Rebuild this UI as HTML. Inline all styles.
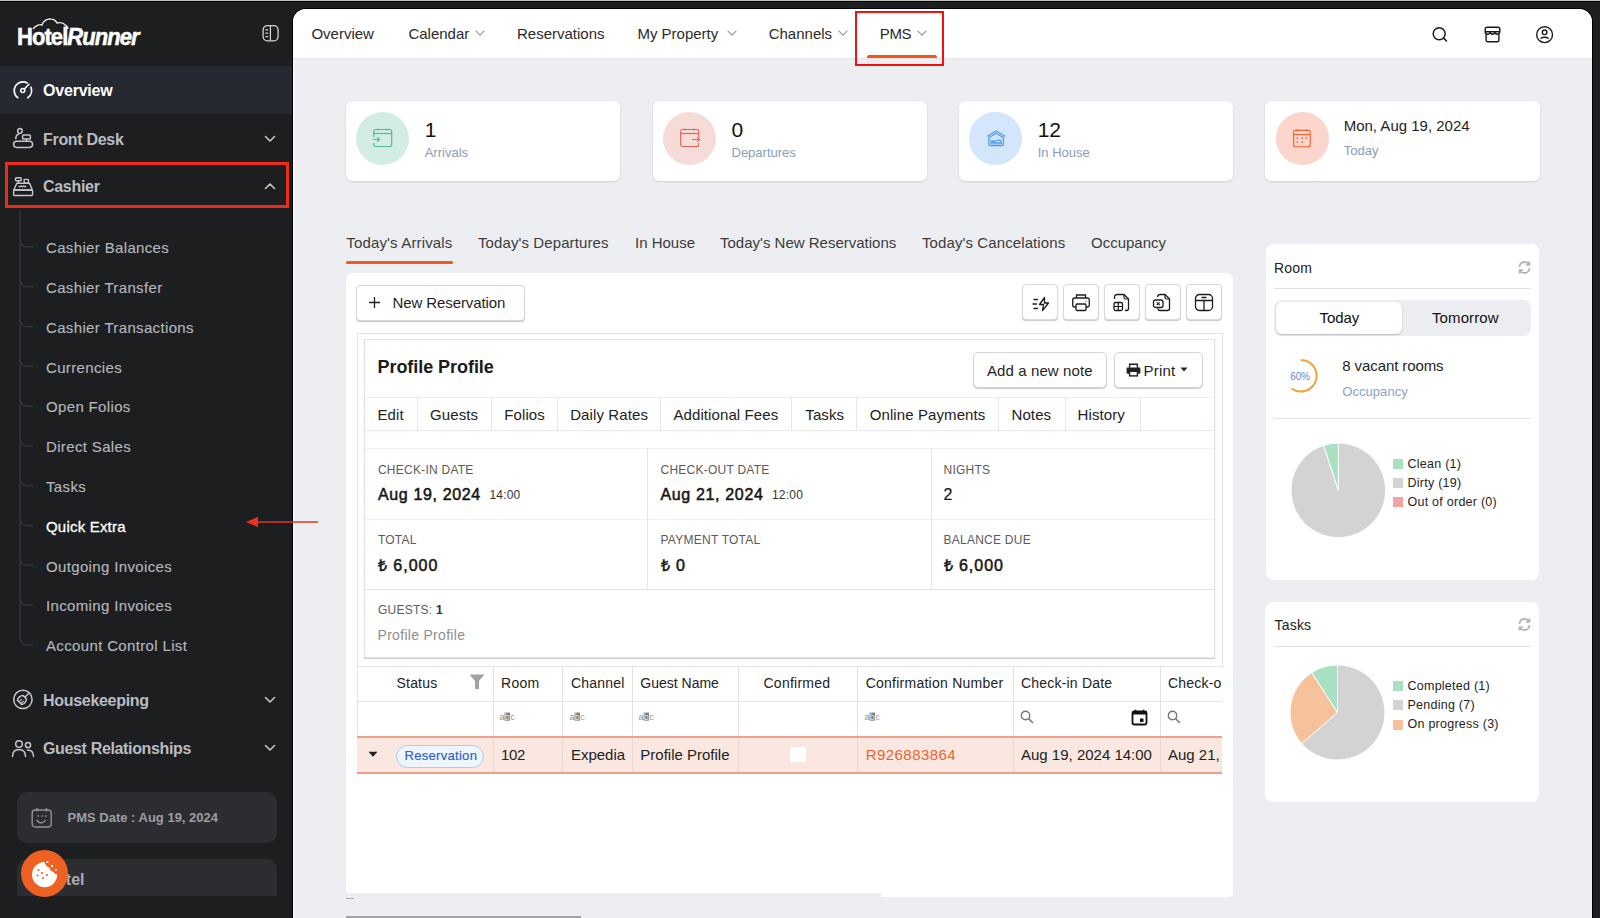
<!DOCTYPE html>
<html><head><meta charset="utf-8">
<style>
*{box-sizing:border-box;margin:0;padding:0}
html,body{width:1600px;height:918px;overflow:hidden;background:#1d1e20;font-family:"Liberation Sans",sans-serif}
body{position:relative}
.a{position:absolute}
.t{position:absolute;white-space:nowrap}
</style></head><body>
<div class="a" style="left:0px;top:0px;width:1600px;height:1px;background:#bebdc0"></div>
<div class="a" style="left:0px;top:1px;width:1600px;height:1px;background:#000"></div>
<div class="t" style="left:17px;top:24.6px;font-size:24px;line-height:24px;font-weight:700;color:#fff;letter-spacing:-1.0px;-webkit-text-stroke:0.55px #fff;transform:scaleX(0.915);transform-origin:0 0">Hotel<span style="font-style:italic">Runner</span></div>
<svg class="a" style="left:30px;top:16px;" width="42" height="15" viewBox="0 0 42 15"><path d="M3 13 C6 9 10 8 12 9 C13 5 17 2.5 21 3 C24 3.2 26 5 27 7 C30 6 34 7 35 9 C37 10 38 12 38 13" fill="none" stroke="#e6e6e6" stroke-width="1.4"/></svg>
<svg class="a" style="left:261px;top:24px;" width="19" height="19" viewBox="0 0 19 19"><rect x="2.1" y="1.6" width="15" height="15.3" rx="4.3" fill="none" stroke="#d2d3d6" stroke-width="1.3"/><line x1="9.4" y1="2" x2="9.4" y2="16.5" stroke="#d2d3d6" stroke-width="1.3"/><path d="M4.9 5.9 H6.6 M4.9 9.2 H6.6 M4.9 12.6 H6.6" stroke="#d2d3d6" stroke-width="1.3" stroke-linecap="round"/></svg>
<div class="a" style="left:0px;top:66px;width:292px;height:48px;background:#262932"></div>
<svg class="a" style="left:12px;top:80px;" width="22" height="20" viewBox="0 0 22 20"><path d="M5.75 17.7 A8.8 8.8 0 0 1 15.2 2.9" fill="none" stroke="#fff" stroke-width="1.7" stroke-linecap="round"/><path d="M18.96 7.2 A8.8 8.8 0 0 1 15.85 17.7" fill="none" stroke="#fff" stroke-width="1.7" stroke-linecap="round"/><circle cx="10.8" cy="10.5" r="2" fill="none" stroke="#fff" stroke-width="1.6"/><line x1="12.3" y1="9" x2="17" y2="4.3" stroke="#fff" stroke-width="1.6" stroke-linecap="round"/></svg>
<div class="t" style="left:43px;top:83.10px;font-size:16px;line-height:16px;color:#ffffff;font-weight:700;letter-spacing:-0.2px">Overview</div>
<svg class="a" style="left:12px;top:127px;" width="23" height="23" viewBox="0 0 23 23"><circle cx="7.9" cy="3.9" r="2.3" fill="none" stroke="#c4c6cc" stroke-width="1.5"/><path d="M6.8 7.2 Q3.8 7.6 3.8 11.8" fill="none" stroke="#c4c6cc" stroke-width="1.5" stroke-linecap="round"/><rect x="10.6" y="7.9" width="7.8" height="4.2" rx="0.8" fill="none" stroke="#c4c6cc" stroke-width="1.5"/><line x1="14.5" y1="12.1" x2="14.5" y2="14.2" stroke="#c4c6cc" stroke-width="1.5"/><rect x="1.6" y="14.2" width="19" height="6.2" rx="3.1" fill="none" stroke="#c4c6cc" stroke-width="1.5"/></svg>
<div class="t" style="left:43px;top:131.60px;font-size:16px;line-height:16px;color:#b9bcc2;font-weight:700;letter-spacing:-0.3px">Front Desk</div>
<svg class="a" style="left:264px;top:134.5px;" width="12" height="8" viewBox="0 0 12 8"><path d="M1.5 1.5 L6 6 L10.5 1.5" fill="none" stroke="#c4c6cc" stroke-width="1.6" stroke-linecap="round" stroke-linejoin="round"/></svg>
<svg class="a" style="left:12px;top:176px;" width="22" height="21" viewBox="0 0 22 21"><rect x="3.3" y="1.7" width="6.2" height="3" rx="1.5" fill="none" stroke="#c4c6cc" stroke-width="1.4"/><line x1="6.4" y1="4.7" x2="6.4" y2="7.2" stroke="#c4c6cc" stroke-width="1.4"/><rect x="12.2" y="3.4" width="4.2" height="3.8" rx="0.5" fill="none" stroke="#c4c6cc" stroke-width="1.4"/><path d="M4.8 7.2 H17.6 L20.3 14 H1.8 Z" fill="none" stroke="#c4c6cc" stroke-width="1.4" stroke-linejoin="round"/><rect x="1.6" y="14" width="19" height="5.5" rx="1.2" fill="none" stroke="#c4c6cc" stroke-width="1.4"/><path d="M6.5 9.8 L7.8 11 L9.1 9.8 L10.4 11 L11.7 9.8 L13 11 L14.3 9.8" fill="none" stroke="#c4c6cc" stroke-width="1.1"/></svg>
<div class="t" style="left:43px;top:178.90px;font-size:16px;line-height:16px;color:#b9bcc2;font-weight:700;letter-spacing:-0.3px">Cashier</div>
<svg class="a" style="left:264px;top:182px;" width="12" height="8" viewBox="0 0 12 8"><path d="M1.5 6.5 L6 2 L10.5 6.5" fill="none" stroke="#c4c6cc" stroke-width="1.6" stroke-linecap="round" stroke-linejoin="round"/></svg>
<div class="a" style="left:5px;top:162px;width:284px;height:46px;border:3px solid #ee2a1b"></div>
<div class="t" style="left:46px;top:240.25px;font-size:15px;line-height:15px;color:#b3b6bc;font-weight:400;letter-spacing:0.35px;-webkit-text-stroke:0.15px #b3b6bc">Cashier Balances</div>
<div class="t" style="left:46px;top:280.05px;font-size:15px;line-height:15px;color:#b3b6bc;font-weight:400;letter-spacing:0.35px;-webkit-text-stroke:0.15px #b3b6bc">Cashier Transfer</div>
<div class="t" style="left:46px;top:319.85px;font-size:15px;line-height:15px;color:#b3b6bc;font-weight:400;letter-spacing:0.35px;-webkit-text-stroke:0.15px #b3b6bc">Cashier Transactions</div>
<div class="t" style="left:46px;top:359.65px;font-size:15px;line-height:15px;color:#b3b6bc;font-weight:400;letter-spacing:0.35px;-webkit-text-stroke:0.15px #b3b6bc">Currencies</div>
<div class="t" style="left:46px;top:399.45px;font-size:15px;line-height:15px;color:#b3b6bc;font-weight:400;letter-spacing:0.35px;-webkit-text-stroke:0.15px #b3b6bc">Open Folios</div>
<div class="t" style="left:46px;top:439.25px;font-size:15px;line-height:15px;color:#b3b6bc;font-weight:400;letter-spacing:0.35px;-webkit-text-stroke:0.15px #b3b6bc">Direct Sales</div>
<div class="t" style="left:46px;top:479.05px;font-size:15px;line-height:15px;color:#b3b6bc;font-weight:400;letter-spacing:0.35px;-webkit-text-stroke:0.15px #b3b6bc">Tasks</div>
<div class="t" style="left:46px;top:518.85px;font-size:15px;line-height:15px;color:#ffffff;font-weight:400;letter-spacing:0.2px;-webkit-text-stroke:0.3px #fff">Quick Extra</div>
<div class="t" style="left:46px;top:558.65px;font-size:15px;line-height:15px;color:#b3b6bc;font-weight:400;letter-spacing:0.35px;-webkit-text-stroke:0.15px #b3b6bc">Outgoing Invoices</div>
<div class="t" style="left:46px;top:598.45px;font-size:15px;line-height:15px;color:#b3b6bc;font-weight:400;letter-spacing:0.35px;-webkit-text-stroke:0.15px #b3b6bc">Incoming Invoices</div>
<div class="t" style="left:46px;top:638.25px;font-size:15px;line-height:15px;color:#b3b6bc;font-weight:400;letter-spacing:0.35px;-webkit-text-stroke:0.15px #b3b6bc">Account Control List</div>
<svg class="a" style="left:19px;top:210px;" width="16" height="450" viewBox="0 0 16 450"><line x1="1" y1="0" x2="1" y2="427" stroke="#2f323a" stroke-width="1.6"/><path d="M1 29.0 Q1 37.0 9 37.0 H14" fill="none" stroke="#2f323a" stroke-width="1.6"/><path d="M1 68.80000000000001 Q1 76.80000000000001 9 76.80000000000001 H14" fill="none" stroke="#2f323a" stroke-width="1.6"/><path d="M1 108.60000000000002 Q1 116.60000000000002 9 116.60000000000002 H14" fill="none" stroke="#2f323a" stroke-width="1.6"/><path d="M1 148.39999999999998 Q1 156.39999999999998 9 156.39999999999998 H14" fill="none" stroke="#2f323a" stroke-width="1.6"/><path d="M1 188.2 Q1 196.2 9 196.2 H14" fill="none" stroke="#2f323a" stroke-width="1.6"/><path d="M1 228.0 Q1 236.0 9 236.0 H14" fill="none" stroke="#2f323a" stroke-width="1.6"/><path d="M1 267.79999999999995 Q1 275.79999999999995 9 275.79999999999995 H14" fill="none" stroke="#2f323a" stroke-width="1.6"/><path d="M1 307.5999999999999 Q1 315.5999999999999 9 315.5999999999999 H14" fill="none" stroke="#2f323a" stroke-width="1.6"/><path d="M1 347.4 Q1 355.4 9 355.4 H14" fill="none" stroke="#2f323a" stroke-width="1.6"/><path d="M1 387.20000000000005 Q1 395.20000000000005 9 395.20000000000005 H14" fill="none" stroke="#2f323a" stroke-width="1.6"/><path d="M1 427.0 Q1 435.0 9 435.0 H14" fill="none" stroke="#2f323a" stroke-width="1.6"/></svg>
<svg class="a" style="left:12px;top:689px;" width="22" height="22" viewBox="0 0 22 22"><circle cx="10.9" cy="10.4" r="9.2" fill="none" stroke="#c4c6cc" stroke-width="1.5"/><path d="M12.8 8.2 L16.3 4.7" stroke="#c4c6cc" stroke-width="1.5" stroke-linecap="round"/><path d="M11.2 6.6 L14.4 9.8 C14.2 12.8 12.6 14.8 9.8 15.6 L5.4 11.2 C6.2 8.4 8.2 6.8 11.2 6.6 Z" fill="none" stroke="#c4c6cc" stroke-width="1.5" stroke-linejoin="round"/><path d="M7.8 12.2 L9.6 10.4 M9.6 14 L11.4 12.2" stroke="#c4c6cc" stroke-width="1.2" stroke-linecap="round"/></svg>
<div class="t" style="left:43px;top:693.10px;font-size:16px;line-height:16px;color:#b9bcc2;font-weight:700;letter-spacing:-0.3px">Housekeeping</div>
<svg class="a" style="left:264px;top:696px;" width="12" height="8" viewBox="0 0 12 8"><path d="M1.5 1.5 L6 6 L10.5 1.5" fill="none" stroke="#c4c6cc" stroke-width="1.6" stroke-linecap="round" stroke-linejoin="round"/></svg>
<svg class="a" style="left:11px;top:739px;" width="24" height="19" viewBox="0 0 24 19"><circle cx="8" cy="5" r="3.3" fill="none" stroke="#c4c6cc" stroke-width="1.5"/><path d="M1.5 17.5 C1.5 13 4 10.5 8 10.5 C12 10.5 14.5 13 14.5 17.5" fill="none" stroke="#c4c6cc" stroke-width="1.5" stroke-linecap="round"/><circle cx="17" cy="6" r="2.6" fill="none" stroke="#c4c6cc" stroke-width="1.5"/><path d="M16.5 11 C20 11 22.5 13 22.5 17.5" fill="none" stroke="#c4c6cc" stroke-width="1.5" stroke-linecap="round"/></svg>
<div class="t" style="left:43px;top:740.50px;font-size:16px;line-height:16px;color:#b9bcc2;font-weight:700;letter-spacing:-0.35px">Guest Relationships</div>
<svg class="a" style="left:264px;top:744px;" width="12" height="8" viewBox="0 0 12 8"><path d="M1.5 1.5 L6 6 L10.5 1.5" fill="none" stroke="#c4c6cc" stroke-width="1.6" stroke-linecap="round" stroke-linejoin="round"/></svg>
<div class="a" style="left:17px;top:792px;width:260px;height:51px;background:#2c2d31;border-radius:10px"></div>
<svg class="a" style="left:31px;top:807px;" width="22" height="21" viewBox="0 0 22 21"><rect x="1.2" y="3" width="19" height="17" rx="3" fill="none" stroke="#909298" stroke-width="1.4"/><line x1="6" y1="1" x2="6" y2="4.5" stroke="#909298" stroke-width="1.4"/><line x1="15.5" y1="1" x2="15.5" y2="4.5" stroke="#909298" stroke-width="1.4"/><path d="M6.5 9 h1.5 M10.5 9 h1.5 M14 9 h1.5" stroke="#909298" stroke-width="1.4"/><path d="M7 14.5 C9 16.5 12.5 16.5 14.5 13" fill="none" stroke="#909298" stroke-width="1.4"/><path d="M5.5 12.8 L7.5 14.8" stroke="#909298" stroke-width="1.4"/></svg>
<div class="t" style="left:67.5px;top:811.15px;font-size:13px;line-height:13px;color:#9c9ea4;font-weight:700;">PMS Date : Aug 19, 2024</div>
<div class="a" style="left:17px;top:859px;width:260px;height:37px;background:#2c2d31;border-radius:10px 10px 0 0"></div>
<div class="t" style="left:44.5px;top:872.40px;font-size:16px;line-height:16px;color:#a9abb0;font-weight:700;">Hotel</div>
<div class="a" style="left:21px;top:850px;width:47px;height:47px;background:#ee6123;border-radius:50%"></div>
<svg class="a" style="left:29px;top:858px;" width="32" height="32" viewBox="0 0 32 32"><path d="M15.5 4 A12.6 12.6 0 1 0 28.2 16.5 C26.5 16.5 25 15.3 24.5 13.8 C22.3 13.8 20.6 12 20.6 9.8 C18 9.3 16 7 15.5 4 Z" fill="#fff"/><circle cx="9.5" cy="12" r="1.1" fill="#ee6123"/><circle cx="13" cy="15" r="1.1" fill="#ee6123"/><circle cx="8.5" cy="17.5" r="1.1" fill="#ee6123"/><circle cx="14" cy="20" r="1.1" fill="#ee6123"/><circle cx="18" cy="17" r="1.1" fill="#ee6123"/><circle cx="18.5" cy="4" r="1.1" fill="#fff"/><circle cx="23" cy="8" r="1.2" fill="#fff"/><circle cx="27" cy="12" r="1" fill="#fff"/></svg>
<div class="a" style="left:292px;top:8px;width:1301px;height:912px;background:#000;border-radius:14px 14px 0 0"></div>
<div class="a" style="left:293px;top:9px;width:1299px;height:909px;background:#edeef2;border-radius:13px 13px 0 0;overflow:hidden"></div>
<div class="a" style="left:293px;top:9px;width:1299px;height:49px;background:#fff;border-radius:13px 13px 0 0"></div>
<div class="a" style="left:293px;top:58px;width:1299px;height:1px;background:#e3e3e6"></div>
<div class="a" style="left:293px;top:59px;width:1.6px;height:859px;background:#f5f6f8"></div>
<div class="t" style="left:311.4px;top:26.25px;font-size:15px;line-height:15px;color:#2a2a2a;font-weight:400;">Overview</div>
<div class="t" style="left:408.4px;top:26.25px;font-size:15px;line-height:15px;color:#2a2a2a;font-weight:400;">Calendar</div>
<svg class="a" style="left:475px;top:30px;" width="10" height="7" viewBox="0 0 10 7"><path d="M1 1.2 L5 5.2 L9 1.2" fill="none" stroke="#9a9a9a" stroke-width="1.2" stroke-linecap="round" stroke-linejoin="round"/></svg>
<div class="t" style="left:517px;top:26.25px;font-size:15px;line-height:15px;color:#2a2a2a;font-weight:400;">Reservations</div>
<div class="t" style="left:637.4px;top:26.25px;font-size:15px;line-height:15px;color:#2a2a2a;font-weight:400;">My Property</div>
<svg class="a" style="left:726.5px;top:30px;" width="10" height="7" viewBox="0 0 10 7"><path d="M1 1.2 L5 5.2 L9 1.2" fill="none" stroke="#9a9a9a" stroke-width="1.2" stroke-linecap="round" stroke-linejoin="round"/></svg>
<div class="t" style="left:768.7px;top:26.25px;font-size:15px;line-height:15px;color:#2a2a2a;font-weight:400;">Channels</div>
<svg class="a" style="left:837.5px;top:30px;" width="10" height="7" viewBox="0 0 10 7"><path d="M1 1.2 L5 5.2 L9 1.2" fill="none" stroke="#9a9a9a" stroke-width="1.2" stroke-linecap="round" stroke-linejoin="round"/></svg>
<div class="t" style="left:879.7px;top:26.25px;font-size:15px;line-height:15px;color:#2a2a2a;font-weight:400;letter-spacing:-0.3px">PMS</div>
<svg class="a" style="left:917px;top:30px;" width="10" height="7" viewBox="0 0 10 7"><path d="M1 1.2 L5 5.2 L9 1.2" fill="none" stroke="#9a9a9a" stroke-width="1.2" stroke-linecap="round" stroke-linejoin="round"/></svg>
<div class="a" style="left:866.8px;top:55.2px;width:70.4px;height:3.3px;background:#f0580f;border-radius:2px 2px 0 0"></div>
<div class="a" style="left:855px;top:11px;width:89.3px;height:54.5px;border:2px solid #f70f0f"></div>
<svg class="a" style="left:1430px;top:24px;" width="20" height="20" viewBox="0 0 20 20"><circle cx="9.2" cy="9.7" r="6" fill="none" stroke="#1a1a1a" stroke-width="1.5"/><line x1="13.6" y1="14.1" x2="16.5" y2="17" stroke="#1a1a1a" stroke-width="1.6" stroke-linecap="round"/></svg>
<svg class="a" style="left:1483px;top:25px;" width="19" height="19" viewBox="0 0 19 19"><path d="M2.2 6.8 V4.2 C2.2 3 3 2.2 4.2 2.2 H14.8 C16 2.2 16.8 3 16.8 4.2 V6.8 H2.2 Z" fill="none" stroke="#1a1a1a" stroke-width="1.4" stroke-linejoin="round"/><path d="M2.2 6.8 A2.43 2.43 0 0 0 7.07 6.8 A2.43 2.43 0 0 0 11.93 6.8 A2.43 2.43 0 0 0 16.8 6.8" fill="none" stroke="#1a1a1a" stroke-width="1.4"/><path d="M3.1 9.2 V15.3 C3.1 16.1 3.7 16.7 4.5 16.7 H14.5 C15.3 16.7 15.9 16.1 15.9 15.3 V9.2" fill="none" stroke="#1a1a1a" stroke-width="1.4"/></svg>
<svg class="a" style="left:1535px;top:25px;" width="20" height="20" viewBox="0 0 20 20"><circle cx="9.6" cy="9.7" r="7.9" fill="none" stroke="#1a1a1a" stroke-width="1.4"/><circle cx="9.6" cy="7.3" r="2.3" fill="none" stroke="#1a1a1a" stroke-width="1.4"/><path d="M6 13.2 C7.5 12 11.7 12 13.2 13.2" fill="none" stroke="#1a1a1a" stroke-width="1.4" stroke-linecap="round"/></svg>
<div class="a" style="left:345.7px;top:101px;width:274.5px;height:79.5px;background:#fff;border-radius:6px;box-shadow:0 1px 2px rgba(0,0,0,0.10),0 0 0 0.5px rgba(0,0,0,0.04)"></div>
<div class="a" style="left:356.2px;top:111.5px;width:53px;height:53px;background:#d3ede4;border-radius:50%"></div>
<svg class="a" style="left:372.7px;top:127.8px;" width="21" height="21" viewBox="0 0 21 21"><rect x="0.7" y="1.5" width="18" height="17" rx="2" fill="none" stroke="#4cbf9a" stroke-width="1.2"/><line x1="0.7" y1="5.5" x2="18.7" y2="5.5" stroke="#4cbf9a" stroke-width="1.2"/><path d="M5 0.5 V2.5 M14 0.5 V2.5" stroke="#4cbf9a" stroke-width="1.2"/><rect x="-1" y="9" width="4" height="6" fill="#d3ede4"/><path d="M0 11.5 H6.5 M4.2 9.3 L6.5 11.5 L4.2 13.7" fill="none" stroke="#4cbf9a" stroke-width="1.2"/></svg>
<div class="t" style="left:424.7px;top:118.85px;font-size:21px;line-height:21px;color:#111;font-weight:400;">1</div>
<div class="t" style="left:424.7px;top:146.05px;font-size:13px;line-height:13px;color:#8a9cba;font-weight:400;">Arrivals</div>
<div class="a" style="left:652.5px;top:101px;width:274.5px;height:79.5px;background:#fff;border-radius:6px;box-shadow:0 1px 2px rgba(0,0,0,0.10),0 0 0 0.5px rgba(0,0,0,0.04)"></div>
<div class="a" style="left:663.0px;top:111.5px;width:53px;height:53px;background:#f6dcd9;border-radius:50%"></div>
<svg class="a" style="left:679.5px;top:127.8px;" width="21" height="21" viewBox="0 0 21 21"><rect x="0.7" y="1.5" width="18" height="17" rx="2" fill="none" stroke="#e4665a" stroke-width="1.2"/><line x1="0.7" y1="5.5" x2="18.7" y2="5.5" stroke="#e4665a" stroke-width="1.2"/><path d="M5 0.5 V2.5 M14 0.5 V2.5" stroke="#e4665a" stroke-width="1.2"/><rect x="16" y="9" width="4" height="6" fill="#f6dcd9"/><path d="M12 11.5 H19.5 M17.2 9.3 L19.5 11.5 L17.2 13.7" fill="none" stroke="#e4665a" stroke-width="1.2"/></svg>
<div class="t" style="left:731.5px;top:118.85px;font-size:21px;line-height:21px;color:#111;font-weight:400;">0</div>
<div class="t" style="left:731.5px;top:146.05px;font-size:13px;line-height:13px;color:#8a9cba;font-weight:400;">Departures</div>
<div class="a" style="left:958.7px;top:101px;width:274.5px;height:79.5px;background:#fff;border-radius:6px;box-shadow:0 1px 2px rgba(0,0,0,0.10),0 0 0 0.5px rgba(0,0,0,0.04)"></div>
<div class="a" style="left:969.2px;top:111.5px;width:53px;height:53px;background:#d3e6fb;border-radius:50%"></div>
<svg class="a" style="left:985.5px;top:128.6px;" width="21" height="21" viewBox="0 0 21 21"><path d="M1 7.6 L10.1 2 L19.2 7.6" fill="none" stroke="#4a9ae8" stroke-width="1.2" stroke-linejoin="round"/><path d="M10.1 4.3 L2.8 8.7 V15.3 Q2.8 16.7 4.2 16.7 H16 Q17.4 16.7 17.4 15.3 V8.7 Z" fill="none" stroke="#4a9ae8" stroke-width="1.2" stroke-linejoin="round"/><path d="M5 10.8 V15.2 M5 13.9 H15.2 M15.2 11.3 V15.2" fill="none" stroke="#4a9ae8" stroke-width="1.1"/><rect x="6" y="11.3" width="2.4" height="1.7" fill="#4a9ae8"/><path d="M9 13.2 C9 11.7 10.5 10.9 12.8 11.1 L14.8 11.4" fill="none" stroke="#4a9ae8" stroke-width="1.1"/><rect x="5.5" y="14.4" width="9.2" height="1.2" fill="#4a9ae8" opacity="0.6"/></svg>
<div class="t" style="left:1037.7px;top:118.85px;font-size:21px;line-height:21px;color:#111;font-weight:400;">12</div>
<div class="t" style="left:1037.7px;top:146.05px;font-size:13px;line-height:13px;color:#8a9cba;font-weight:400;">In House</div>
<div class="a" style="left:1265.2px;top:101px;width:274.5px;height:79.5px;background:#fff;border-radius:6px;box-shadow:0 1px 2px rgba(0,0,0,0.10),0 0 0 0.5px rgba(0,0,0,0.04)"></div>
<div class="a" style="left:1275.7px;top:111.5px;width:53px;height:53px;background:#fcd6cc;border-radius:50%"></div>
<svg class="a" style="left:1292.2px;top:127.8px;" width="21" height="21" viewBox="0 0 21 21"><rect x="1.65" y="2.3" width="16.6" height="16.4" rx="2" fill="none" stroke="#ef6434" stroke-width="1.15"/><line x1="1.65" y1="6.6" x2="18.25" y2="6.6" stroke="#ef6434" stroke-width="1.15"/><path d="M5.6 0.9 V3.4 M14.4 0.9 V3.4" stroke="#ef6434" stroke-width="1.3"/><g fill="#ef6434"><circle cx="5.4" cy="9.9" r="0.85"/><circle cx="10" cy="9.9" r="0.85"/><circle cx="14.4" cy="9.9" r="0.85"/><circle cx="5.4" cy="14.2" r="0.85"/><circle cx="10" cy="14.2" r="0.85"/></g></svg>
<div class="t" style="left:1343.7px;top:117.55px;font-size:15px;line-height:15px;color:#1e1e1e;font-weight:400;letter-spacing:0px">Mon, Aug 19, 2024</div>
<div class="t" style="left:1343.7px;top:143.75px;font-size:13px;line-height:13px;color:#8a9cba;font-weight:400;">Today</div>
<div class="t" style="left:346.3px;top:235.35px;font-size:15px;line-height:15px;color:#3c3c3c;font-weight:400;letter-spacing:0.15px">Today's Arrivals</div>
<div class="t" style="left:478px;top:235.35px;font-size:15px;line-height:15px;color:#3c3c3c;font-weight:400;letter-spacing:0.1px">Today's Departures</div>
<div class="t" style="left:635px;top:235.35px;font-size:15px;line-height:15px;color:#3c3c3c;font-weight:400;">In House</div>
<div class="t" style="left:720px;top:235.35px;font-size:15px;line-height:15px;color:#3c3c3c;font-weight:400;">Today's New Reservations</div>
<div class="t" style="left:922px;top:235.35px;font-size:15px;line-height:15px;color:#3c3c3c;font-weight:400;letter-spacing:0.1px">Today's Cancelations</div>
<div class="t" style="left:1091px;top:235.35px;font-size:15px;line-height:15px;color:#3c3c3c;font-weight:400;">Occupancy</div>
<div class="a" style="left:346px;top:261px;width:107px;height:3px;background:#f05a1e;border-radius:2px"></div>
<div class="a" style="left:345.6px;top:273.2px;width:887.4px;height:620px;background:#fff;border-radius:7px 7px 0 3px"></div>
<div class="a" style="left:881px;top:890px;width:352px;height:6.8px;background:#fff;border-radius:0 0 4px 0"></div>
<div class="a" style="left:355.5px;top:284.5px;width:169.5px;height:36px;background:#fff;border:1px solid #d6d6d6;border-radius:4px;box-shadow:0 1px 1px rgba(0,0,0,0.22)"></div>
<svg class="a" style="left:368px;top:296px;" width="13" height="13" viewBox="0 0 13 13"><path d="M6.5 1 V12 M1 6.5 H12" stroke="#222" stroke-width="1.3"/></svg>
<div class="t" style="left:392.5px;top:295.00px;font-size:15px;line-height:15px;color:#1f1f1f;font-weight:400;letter-spacing:-0.1px">New Reservation</div>
<div class="a" style="left:1022.0px;top:284.3px;width:36.3px;height:36px;background:#fff;border:1px solid #d9d9d9;border-radius:4px;box-shadow:0 1px 1px rgba(0,0,0,0.22)"></div>
<div class="a" style="left:1062.9px;top:284.3px;width:36.3px;height:36px;background:#fff;border:1px solid #d9d9d9;border-radius:4px;box-shadow:0 1px 1px rgba(0,0,0,0.22)"></div>
<div class="a" style="left:1103.8px;top:284.3px;width:36.3px;height:36px;background:#fff;border:1px solid #d9d9d9;border-radius:4px;box-shadow:0 1px 1px rgba(0,0,0,0.22)"></div>
<div class="a" style="left:1144.7px;top:284.3px;width:36.3px;height:36px;background:#fff;border:1px solid #d9d9d9;border-radius:4px;box-shadow:0 1px 1px rgba(0,0,0,0.22)"></div>
<div class="a" style="left:1185.6px;top:284.3px;width:36.3px;height:36px;background:#fff;border:1px solid #d9d9d9;border-radius:4px;box-shadow:0 1px 1px rgba(0,0,0,0.22)"></div>
<svg class="a" style="left:1031.5px;top:295.5px;" width="20" height="16" viewBox="0 0 20 16"><path d="M2 3.5 H5.5 M1 8 H4.5 M2 12.5 H5.5" stroke="#1c1c1c" stroke-width="1.3" stroke-linecap="round"/><path d="M12.5 1.5 L7.5 8.5 H11.5 L10.5 14.5 L16.5 7 H12.5 Z" fill="none" stroke="#1c1c1c" stroke-width="1.3" stroke-linejoin="round"/></svg>
<svg class="a" style="left:1071px;top:293px;" width="20" height="19" viewBox="0 0 20 19"><path d="M5.5 5 V2 H14.5 V5" fill="none" stroke="#1c1c1c" stroke-width="1.3"/><path d="M5 14 H3.5 C2.5 14 1.7 13.2 1.7 12.2 V7 C1.7 5.9 2.5 5 3.6 5 H16.4 C17.5 5 18.3 5.9 18.3 7 V12.2 C18.3 13.2 17.5 14 16.5 14 H15" fill="none" stroke="#1c1c1c" stroke-width="1.3"/><rect x="5" y="11" width="10" height="6.5" rx="1" fill="none" stroke="#1c1c1c" stroke-width="1.3"/><circle cx="15" cy="8" r="0.6" fill="#1c1c1c"/></svg>
<svg class="a" style="left:1112px;top:293px;" width="20" height="19" viewBox="0 0 20 19"><path d="M2.5 6 V4 C2.5 2.5 3.5 1.5 5 1.5 H12 L16.5 6 V15.5 C16.5 16.7 15.7 17.5 14.5 17.5 H13" fill="none" stroke="#1c1c1c" stroke-width="1.3"/><path d="M12 1.5 V4.5 C12 5.3 12.7 6 13.5 6 H16.5" fill="none" stroke="#1c1c1c" stroke-width="1.2"/><rect x="2" y="9.5" width="8.5" height="8" rx="1.5" fill="none" stroke="#1c1c1c" stroke-width="1.3"/><path d="M6.25 9.5 V17.5 M2 13.5 H10.5" stroke="#1c1c1c" stroke-width="1.2"/></svg>
<svg class="a" style="left:1152px;top:293px;" width="20" height="19" viewBox="0 0 20 19"><path d="M5.5 4 C5.5 2.5 6.5 1.5 8 1.5 H13 L17.5 6 V15.5 C17.5 16.7 16.7 17.5 15.5 17.5 H8 C6.8 17.5 6 16.7 6 15.5" fill="none" stroke="#1c1c1c" stroke-width="1.3"/><path d="M13 1.5 V4.5 C13 5.3 13.7 6 14.5 6 H17.5" fill="none" stroke="#1c1c1c" stroke-width="1.2"/><rect x="1.5" y="7" width="9.5" height="7.5" rx="2" fill="#fff" stroke="#1c1c1c" stroke-width="1.3"/><path d="M4.8 9.3 L7.7 12.2 M7.7 9.3 L4.8 12.2" stroke="#1c1c1c" stroke-width="1.1"/></svg>
<svg class="a" style="left:1194px;top:293px;" width="20" height="19" viewBox="0 0 20 19"><rect x="1.5" y="1.5" width="17" height="16" rx="4" fill="none" stroke="#1c1c1c" stroke-width="1.3"/><path d="M1.5 7.5 H18.5 M10 7.5 V17.5 M7.5 4.5 H12.5" stroke="#1c1c1c" stroke-width="1.3"/></svg>
<div class="a" style="left:356.5px;top:332.5px;width:866px;height:334px;border:1px solid #e3e3e3;border-bottom:none"></div>
<div class="a" style="left:363.5px;top:339.4px;width:851px;height:318.5px;background:#fff;border:1px solid #dfe2e8;box-shadow:0 1px 1px rgba(120,130,160,0.35)"></div>
<div class="t" style="left:377.5px;top:358.10px;font-size:18px;line-height:18px;color:#1a1a1a;font-weight:700;letter-spacing:-0.05px">Profile Profile</div>
<div class="a" style="left:973px;top:352px;width:134px;height:36px;background:#fff;border:1px solid #d6d6d6;border-radius:5px;box-shadow:0 1px 1px rgba(0,0,0,0.22)"></div>
<div class="t" style="left:987px;top:362.75px;font-size:15px;line-height:15px;color:#1f1f1f;font-weight:400;letter-spacing:0.1px">Add a new note</div>
<div class="a" style="left:1113.5px;top:352px;width:89px;height:36px;background:#fff;border:1px solid #d6d6d6;border-radius:5px;box-shadow:0 1px 1px rgba(0,0,0,0.22)"></div>
<svg class="a" style="left:1126px;top:363px;" width="15" height="14" viewBox="0 0 15 14"><path d="M3.6 4.8 V1.3 H11.4 V4.8" fill="none" stroke="#222" stroke-width="1.4"/><rect x="0.6" y="4.6" width="13.8" height="6.2" rx="1.2" fill="#222"/><rect x="3.6" y="8.3" width="7.8" height="4.6" fill="#fff" stroke="#222" stroke-width="1.4"/></svg>
<div class="t" style="left:1143.5px;top:362.75px;font-size:15px;line-height:15px;color:#1f1f1f;font-weight:400;letter-spacing:0.2px">Print</div>
<svg class="a" style="left:1180px;top:367px;" width="8" height="5" viewBox="0 0 8 5"><path d="M0.5 0.5 H7.5 L4 4.5 Z" fill="#222"/></svg>
<div class="a" style="left:364.5px;top:397px;width:849px;height:1px;background:#eef0f4"></div>
<div class="a" style="left:364.5px;top:430px;width:849px;height:1px;background:#e6e9ef"></div>
<div class="t" style="left:377.5px;top:406.75px;font-size:15px;line-height:15px;color:#222;font-weight:400;letter-spacing:0.1px">Edit</div>
<div class="t" style="left:430px;top:406.75px;font-size:15px;line-height:15px;color:#222;font-weight:400;letter-spacing:0.1px">Guests</div>
<div class="t" style="left:504.3px;top:406.75px;font-size:15px;line-height:15px;color:#222;font-weight:400;letter-spacing:0.1px">Folios</div>
<div class="t" style="left:570.2px;top:406.75px;font-size:15px;line-height:15px;color:#222;font-weight:400;letter-spacing:0.1px">Daily Rates</div>
<div class="t" style="left:673.4px;top:406.75px;font-size:15px;line-height:15px;color:#222;font-weight:400;letter-spacing:0.1px">Additional Fees</div>
<div class="t" style="left:805.3px;top:406.75px;font-size:15px;line-height:15px;color:#222;font-weight:400;letter-spacing:0.1px">Tasks</div>
<div class="t" style="left:869.7px;top:406.75px;font-size:15px;line-height:15px;color:#222;font-weight:400;letter-spacing:0.1px">Online Payments</div>
<div class="t" style="left:1011.5px;top:406.75px;font-size:15px;line-height:15px;color:#222;font-weight:400;letter-spacing:0.1px">Notes</div>
<div class="t" style="left:1077.6px;top:406.75px;font-size:15px;line-height:15px;color:#222;font-weight:400;letter-spacing:0.1px">History</div>
<div class="a" style="left:416.6px;top:397px;width:1px;height:33px;background:#e4e7ee"></div>
<div class="a" style="left:491.2px;top:397px;width:1px;height:33px;background:#e4e7ee"></div>
<div class="a" style="left:557.3px;top:397px;width:1px;height:33px;background:#e4e7ee"></div>
<div class="a" style="left:660.2px;top:397px;width:1px;height:33px;background:#e4e7ee"></div>
<div class="a" style="left:791.2px;top:397px;width:1px;height:33px;background:#e4e7ee"></div>
<div class="a" style="left:856.2px;top:397px;width:1px;height:33px;background:#e4e7ee"></div>
<div class="a" style="left:998px;top:397px;width:1px;height:33px;background:#e4e7ee"></div>
<div class="a" style="left:1065.2px;top:397px;width:1px;height:33px;background:#e4e7ee"></div>
<div class="a" style="left:1140.3px;top:397px;width:1px;height:33px;background:#e4e7ee"></div>
<div class="a" style="left:364.5px;top:448px;width:849px;height:1px;background:#eef0f4"></div>
<div class="a" style="left:364.5px;top:518.5px;width:849px;height:1px;background:#eef0f4"></div>
<div class="a" style="left:364.5px;top:589px;width:849px;height:1px;background:#dde2ec"></div>
<div class="a" style="left:647px;top:448px;width:1px;height:141px;background:#e4e8ef"></div>
<div class="a" style="left:930.5px;top:448px;width:1px;height:141px;background:#e4e8ef"></div>
<div class="t" style="left:377.9px;top:463.80px;font-size:12px;line-height:12px;color:#5a5a5a;font-weight:400;letter-spacing:0.25px">CHECK-IN DATE</div>
<div class="t" style="left:377.9px;top:487.30px;font-size:16px;line-height:16px;color:#151515;font-weight:400;letter-spacing:0.65px;-webkit-text-stroke:0.5px #151515">Aug 19, 2024</div>
<div class="t" style="left:489.4px;top:488.80px;font-size:12px;line-height:12px;color:#333;font-weight:400;letter-spacing:0.2px">14:00</div>
<div class="t" style="left:377.9px;top:534.00px;font-size:12px;line-height:12px;color:#5a5a5a;font-weight:400;letter-spacing:0.25px">TOTAL</div>
<div class="t" style="left:377.9px;top:557.60px;font-size:16px;line-height:16px;color:#151515;font-weight:400;letter-spacing:1.0px;-webkit-text-stroke:0.5px #151515">&#8378; 6,000</div>
<div class="t" style="left:660.5px;top:463.80px;font-size:12px;line-height:12px;color:#5a5a5a;font-weight:400;letter-spacing:0.25px">CHECK-OUT DATE</div>
<div class="t" style="left:660.5px;top:487.30px;font-size:16px;line-height:16px;color:#151515;font-weight:400;letter-spacing:0.65px;-webkit-text-stroke:0.5px #151515">Aug 21, 2024</div>
<div class="t" style="left:772.0px;top:488.80px;font-size:12px;line-height:12px;color:#333;font-weight:400;letter-spacing:0.2px">12:00</div>
<div class="t" style="left:660.5px;top:534.00px;font-size:12px;line-height:12px;color:#5a5a5a;font-weight:400;letter-spacing:0.25px">PAYMENT TOTAL</div>
<div class="t" style="left:660.5px;top:557.60px;font-size:16px;line-height:16px;color:#151515;font-weight:400;letter-spacing:1.0px;-webkit-text-stroke:0.5px #151515">&#8378; 0</div>
<div class="t" style="left:943.5px;top:463.80px;font-size:12px;line-height:12px;color:#5a5a5a;font-weight:400;letter-spacing:0.25px">NIGHTS</div>
<div class="t" style="left:943.5px;top:487.30px;font-size:16px;line-height:16px;color:#151515;font-weight:400;-webkit-text-stroke:0.2px #151515">2</div>
<div class="t" style="left:943.5px;top:534.00px;font-size:12px;line-height:12px;color:#5a5a5a;font-weight:400;letter-spacing:0.25px">BALANCE DUE</div>
<div class="t" style="left:943.5px;top:557.60px;font-size:16px;line-height:16px;color:#151515;font-weight:400;letter-spacing:1.0px;-webkit-text-stroke:0.5px #151515">&#8378; 6,000</div>
<div class="t" style="left:377.9px;top:604.30px;font-size:12px;line-height:12px;color:#5a5a5a;font-weight:400;letter-spacing:0.25px">GUESTS: <b style='color:#333'>1</b></div>
<div class="t" style="left:377.5px;top:627.60px;font-size:14px;line-height:14px;color:#8e8e8e;font-weight:400;letter-spacing:0.3px">Profile Profile</div>
<div class="a" style="left:356.6px;top:665.5px;width:865.4px;height:1px;background:#e4e4e4"></div>
<div class="a" style="left:356.6px;top:665.5px;width:1px;height:108px;background:#e4e4e4"></div>
<div class="a" style="left:357px;top:700.5px;width:865px;height:1px;background:#e4e4e4"></div>
<div class="a" style="left:492.5px;top:666px;width:1px;height:107px;background:#e2e2e2"></div>
<div class="a" style="left:562.4px;top:666px;width:1px;height:107px;background:#e2e2e2"></div>
<div class="a" style="left:631.5px;top:666px;width:1px;height:107px;background:#e2e2e2"></div>
<div class="a" style="left:737.8px;top:666px;width:1px;height:107px;background:#e2e2e2"></div>
<div class="a" style="left:857.4px;top:666px;width:1px;height:107px;background:#e2e2e2"></div>
<div class="a" style="left:1012.7px;top:666px;width:1px;height:107px;background:#e2e2e2"></div>
<div class="a" style="left:1159.5px;top:666px;width:1px;height:107px;background:#e2e2e2"></div>
<div class="a" style="left:357px;top:736.5px;width:865px;height:37px;background:#f9e7e0"></div>
<div class="a" style="left:357px;top:736px;width:865px;height:2px;background:#f0a08a"></div>
<div class="a" style="left:357px;top:772px;width:865px;height:2px;background:#f0a08a"></div>
<div class="a" style="left:492.5px;top:738px;width:1px;height:34px;background:#e9d8d2"></div>
<div class="a" style="left:562.4px;top:738px;width:1px;height:34px;background:#e9d8d2"></div>
<div class="a" style="left:631.5px;top:738px;width:1px;height:34px;background:#e9d8d2"></div>
<div class="a" style="left:737.8px;top:738px;width:1px;height:34px;background:#e9d8d2"></div>
<div class="a" style="left:857.4px;top:738px;width:1px;height:34px;background:#e9d8d2"></div>
<div class="a" style="left:1012.7px;top:738px;width:1px;height:34px;background:#e9d8d2"></div>
<div class="a" style="left:1159.5px;top:738px;width:1px;height:34px;background:#e9d8d2"></div>
<div class="t" style="left:396.5px;top:676.00px;font-size:14px;line-height:14px;color:#222;font-weight:400;letter-spacing:0.2px">Status</div>
<svg class="a" style="left:469px;top:674px;" width="17" height="16" viewBox="0 0 17 16"><path d="M0.5 0.5 H15.5 L10 7 V15 H6 V7 Z" fill="#a3a3a3"/></svg>
<div class="t" style="left:501px;top:676.00px;font-size:14px;line-height:14px;color:#222;font-weight:400;letter-spacing:0.3px">Room</div>
<div class="t" style="left:570.9px;top:676.00px;font-size:14px;line-height:14px;color:#222;font-weight:400;letter-spacing:0.2px">Channel</div>
<div class="t" style="left:640.3px;top:676.00px;font-size:14px;line-height:14px;color:#222;font-weight:400;">Guest Name</div>
<div class="t" style="left:763.5px;top:676.00px;font-size:14px;line-height:14px;color:#222;font-weight:400;letter-spacing:0.25px">Confirmed</div>
<div class="t" style="left:865.7px;top:676.00px;font-size:14px;line-height:14px;color:#222;font-weight:400;letter-spacing:0.25px">Confirmation Number</div>
<div class="t" style="left:1021px;top:676.00px;font-size:14px;line-height:14px;color:#222;font-weight:400;letter-spacing:0.2px">Check-in Date</div>
<div class="a" style="left:1160px;top:666px;width:62px;height:35px;overflow:hidden">
<div class="t" style="left:8px;top:10.00px;font-size:14px;line-height:14px;color:#222;font-weight:400;letter-spacing:0.2px">Check-out Date</div>
</div>
<svg class="a" style="left:498.5px;top:710px;" width="17" height="13" viewBox="0 0 17 13"><text x="0.5" y="10" font-family="Liberation Sans" font-size="9" fill="#8f8f8f">a</text><rect x="5.6" y="2.6" width="5.4" height="8" fill="#7a7a7a"/><text x="5.8" y="10" font-family="Liberation Sans" font-size="9" fill="#e8e8e8">b</text><text x="11.3" y="10" font-family="Liberation Sans" font-size="9" fill="#8f8f8f">c</text></svg>
<svg class="a" style="left:568.5px;top:710px;" width="17" height="13" viewBox="0 0 17 13"><text x="0.5" y="10" font-family="Liberation Sans" font-size="9" fill="#8f8f8f">a</text><rect x="5.6" y="2.6" width="5.4" height="8" fill="#7a7a7a"/><text x="5.8" y="10" font-family="Liberation Sans" font-size="9" fill="#e8e8e8">b</text><text x="11.3" y="10" font-family="Liberation Sans" font-size="9" fill="#8f8f8f">c</text></svg>
<svg class="a" style="left:638.2px;top:710px;" width="17" height="13" viewBox="0 0 17 13"><text x="0.5" y="10" font-family="Liberation Sans" font-size="9" fill="#8f8f8f">a</text><rect x="5.6" y="2.6" width="5.4" height="8" fill="#7a7a7a"/><text x="5.8" y="10" font-family="Liberation Sans" font-size="9" fill="#e8e8e8">b</text><text x="11.3" y="10" font-family="Liberation Sans" font-size="9" fill="#8f8f8f">c</text></svg>
<svg class="a" style="left:863.5px;top:710px;" width="17" height="13" viewBox="0 0 17 13"><text x="0.5" y="10" font-family="Liberation Sans" font-size="9" fill="#8f8f8f">a</text><rect x="5.6" y="2.6" width="5.4" height="8" fill="#7a7a7a"/><text x="5.8" y="10" font-family="Liberation Sans" font-size="9" fill="#e8e8e8">b</text><text x="11.3" y="10" font-family="Liberation Sans" font-size="9" fill="#8f8f8f">c</text></svg>
<svg class="a" style="left:1020px;top:710px;" width="14" height="14" viewBox="0 0 14 14"><circle cx="5.5" cy="5.5" r="4.2" fill="none" stroke="#777" stroke-width="1.4"/><line x1="8.6" y1="8.6" x2="12.5" y2="12.5" stroke="#777" stroke-width="1.5" stroke-linecap="round"/></svg>
<svg class="a" style="left:1167px;top:710px;" width="14" height="14" viewBox="0 0 14 14"><circle cx="5.5" cy="5.5" r="4.2" fill="none" stroke="#777" stroke-width="1.4"/><line x1="8.6" y1="8.6" x2="12.5" y2="12.5" stroke="#777" stroke-width="1.5" stroke-linecap="round"/></svg>
<svg class="a" style="left:1131px;top:709px;" width="17" height="17" viewBox="0 0 17 17"><rect x="1.5" y="2.5" width="14" height="13" rx="1.5" fill="none" stroke="#111" stroke-width="1.8"/><rect x="1.5" y="2.5" width="14" height="3" fill="#111"/><path d="M4.5 0.8 V3 M12.5 0.8 V3" stroke="#111" stroke-width="1.5"/><rect x="9" y="9.5" width="3.5" height="3.5" fill="#111"/></svg>
<svg class="a" style="left:368px;top:751px;" width="10" height="7" viewBox="0 0 10 7"><path d="M0.5 0.8 H9.5 L5 5.8 Z" fill="#222"/></svg>
<div class="a" style="left:396px;top:744.7px;width:88px;height:23px;background:#eef5ff;border:1px solid #a9c9f1;border-radius:12px"></div>
<div class="t" style="left:404.5px;top:748.75px;font-size:13px;line-height:13px;color:#2a5fcf;font-weight:400;letter-spacing:0.3px;-webkit-text-stroke:0.15px #2a5fcf">Reservation</div>
<div class="t" style="left:501px;top:747.15px;font-size:15px;line-height:15px;color:#222;font-weight:400;letter-spacing:-0.3px">102</div>
<div class="t" style="left:570.9px;top:747.15px;font-size:15px;line-height:15px;color:#222;font-weight:400;">Expedia</div>
<div class="t" style="left:640.3px;top:747.15px;font-size:15px;line-height:15px;color:#222;font-weight:400;">Profile Profile</div>
<div class="a" style="left:789.5px;top:746.5px;width:16.5px;height:15.5px;background:#fff;border-radius:2px"></div>
<div class="t" style="left:865.7px;top:747.15px;font-size:15px;line-height:15px;color:#ef6430;font-weight:400;letter-spacing:0.45px">R926883864</div>
<div class="t" style="left:1021px;top:747.15px;font-size:15px;line-height:15px;color:#222;font-weight:400;">Aug 19, 2024 14:00</div>
<div class="a" style="left:1160px;top:738px;width:62px;height:34px;overflow:hidden">
<div class="t" style="left:8px;top:9.15px;font-size:15px;line-height:15px;color:#222;font-weight:400;">Aug 21, 2024 12:00</div>
</div>
<div class="a" style="left:345.6px;top:897.5px;width:8px;height:1.2px;background:#b0b1b5"></div>
<div class="a" style="left:345.6px;top:916px;width:235px;height:2px;background:#a3a4a9"></div>
<svg class="a" style="left:245px;top:515px;" width="75" height="14" viewBox="0 0 75 14"><line x1="255" y1="7" x2="318" y2="7" stroke="#e8321e" stroke-width="1.7" transform="translate(-245 0)"/><path d="M1 7 L13 1.8 L13 12.2 Z" fill="#e8321e"/></svg>
<div class="a" style="left:1265.5px;top:243.6px;width:273.2px;height:336px;background:#fff;border-radius:8px"></div>
<div class="t" style="left:1274px;top:260.70px;font-size:14px;line-height:14px;color:#222;font-weight:400;letter-spacing:0.2px">Room</div>
<svg class="a" style="left:1517px;top:260px;" width="15" height="15" viewBox="0 0 15 15"><path d="M2.5 7 C2.8 4 5 2 7.8 2 C9.8 2 11.3 3 12.2 4.3 M12.5 1.5 V4.8 H9.2 M12.5 8 C12.2 11 10 13 7.2 13 C5.2 13 3.7 12 2.8 10.7 M2.5 13.5 V10.2 H5.8" fill="none" stroke="#b5b5b5" stroke-width="1.8" stroke-linejoin="round"/></svg>
<div class="a" style="left:1274px;top:288px;width:257px;height:1px;background:#e2e2e2"></div>
<div class="a" style="left:1274px;top:299.5px;width:257px;height:36.5px;background:#ecedf1;border-radius:8px"></div>
<div class="a" style="left:1275.6px;top:301.7px;width:126.6px;height:32.1px;background:#fff;border-radius:6px;box-shadow:0 1px 2px rgba(0,0,0,0.22)"></div>
<div class="t" style="left:1319.5px;top:309.55px;font-size:15px;line-height:15px;color:#111;font-weight:400;letter-spacing:-0.1px">Today</div>
<div class="t" style="left:1432px;top:309.55px;font-size:15px;line-height:15px;color:#111;font-weight:400;letter-spacing:0.1px">Tomorrow</div>
<svg class="a" style="left:1280px;top:355px;" width="42" height="42" viewBox="0 0 42 42"><path d="M20.799999999999955 4.899999999999988 A15.8 15.8 0 1 1 11.51 33.48" fill="none" stroke="#f0a43a" stroke-width="2"/></svg>
<div class="t" style="left:1290.3px;top:372.00px;font-size:10px;line-height:10px;color:#5b8bd6;font-weight:400;letter-spacing:-0.2px">60%</div>
<div class="t" style="left:1342.3px;top:357.65px;font-size:15px;line-height:15px;color:#1e1e1e;font-weight:400;letter-spacing:-0.1px">8 vacant rooms</div>
<div class="t" style="left:1342.3px;top:384.55px;font-size:13px;line-height:13px;color:#8aa3c8;font-weight:400;letter-spacing:0.05px">Occupancy</div>
<div class="a" style="left:1274px;top:418.3px;width:257px;height:1px;background:#e2e2e2"></div>
<svg class="a" style="left:1288.7px;top:440.9px;" width="98.6" height="98.6" viewBox="0 0 98.6 98.6"><path d="M49.3 49.3 L49.30 2.00 A47.3 47.3 0 1 1 34.68 4.32 Z" fill="#d3d3d3" stroke="#fff" stroke-width="1"/><path d="M49.3 49.3 L34.68 4.32 A47.3 47.3 0 0 1 49.30 2.00 Z" fill="#a8e1c2" stroke="#fff" stroke-width="1"/></svg>
<div class="a" style="left:1393px;top:459.0px;width:10px;height:10px;background:#a8e1c2"></div>
<div class="t" style="left:1407.5px;top:457.68px;font-size:12.5px;line-height:12.5px;color:#1e1e1e;font-weight:400;letter-spacing:0.25px">Clean (1)</div>
<div class="a" style="left:1393px;top:478.2px;width:10px;height:10px;background:#d3d3d3"></div>
<div class="t" style="left:1407.5px;top:476.88px;font-size:12.5px;line-height:12.5px;color:#1e1e1e;font-weight:400;letter-spacing:0.25px">Dirty (19)</div>
<div class="a" style="left:1393px;top:497.4px;width:10px;height:10px;background:#f0a5a2"></div>
<div class="t" style="left:1407.5px;top:496.07px;font-size:12.5px;line-height:12.5px;color:#1e1e1e;font-weight:400;letter-spacing:0.25px">Out of order (0)</div>
<div class="a" style="left:1265.2px;top:601.6px;width:273.5px;height:200px;background:#fff;border-radius:8px"></div>
<div class="t" style="left:1274.5px;top:618.20px;font-size:14px;line-height:14px;color:#222;font-weight:400;letter-spacing:0.2px">Tasks</div>
<svg class="a" style="left:1517px;top:617px;" width="15" height="15" viewBox="0 0 15 15"><path d="M2.5 7 C2.8 4 5 2 7.8 2 C9.8 2 11.3 3 12.2 4.3 M12.5 1.5 V4.8 H9.2 M12.5 8 C12.2 11 10 13 7.2 13 C5.2 13 3.7 12 2.8 10.7 M2.5 13.5 V10.2 H5.8" fill="none" stroke="#b5b5b5" stroke-width="1.8" stroke-linejoin="round"/></svg>
<div class="a" style="left:1274px;top:645.5px;width:257px;height:1px;background:#e2e2e2"></div>
<svg class="a" style="left:1288.1px;top:662.5px;" width="99.0" height="99.0" viewBox="0 0 99.0 99.0"><path d="M49.5 49.5 L49.50 2.00 A47.5 47.5 0 1 1 13.60 80.61 Z" fill="#d3d3d3" stroke="#fff" stroke-width="1"/><path d="M49.5 49.5 L13.60 80.61 A47.5 47.5 0 0 1 23.82 9.54 Z" fill="#f5c29c" stroke="#fff" stroke-width="1"/><path d="M49.5 49.5 L23.82 9.54 A47.5 47.5 0 0 1 49.50 2.00 Z" fill="#a8e1c2" stroke="#fff" stroke-width="1"/></svg>
<div class="a" style="left:1392.5px;top:681.0px;width:10.5px;height:10px;background:#a8e1c2"></div>
<div class="t" style="left:1407.5px;top:679.67px;font-size:12.5px;line-height:12.5px;color:#1e1e1e;font-weight:400;letter-spacing:0.25px">Completed (1)</div>
<div class="a" style="left:1392.5px;top:700.3px;width:10.5px;height:10px;background:#d3d3d3"></div>
<div class="t" style="left:1407.5px;top:698.97px;font-size:12.5px;line-height:12.5px;color:#1e1e1e;font-weight:400;letter-spacing:0.25px">Pending (7)</div>
<div class="a" style="left:1392.5px;top:719.6px;width:10.5px;height:10px;background:#f5c29c"></div>
<div class="t" style="left:1407.5px;top:718.27px;font-size:12.5px;line-height:12.5px;color:#1e1e1e;font-weight:400;letter-spacing:0.25px">On progress (3)</div>
</body></html>
